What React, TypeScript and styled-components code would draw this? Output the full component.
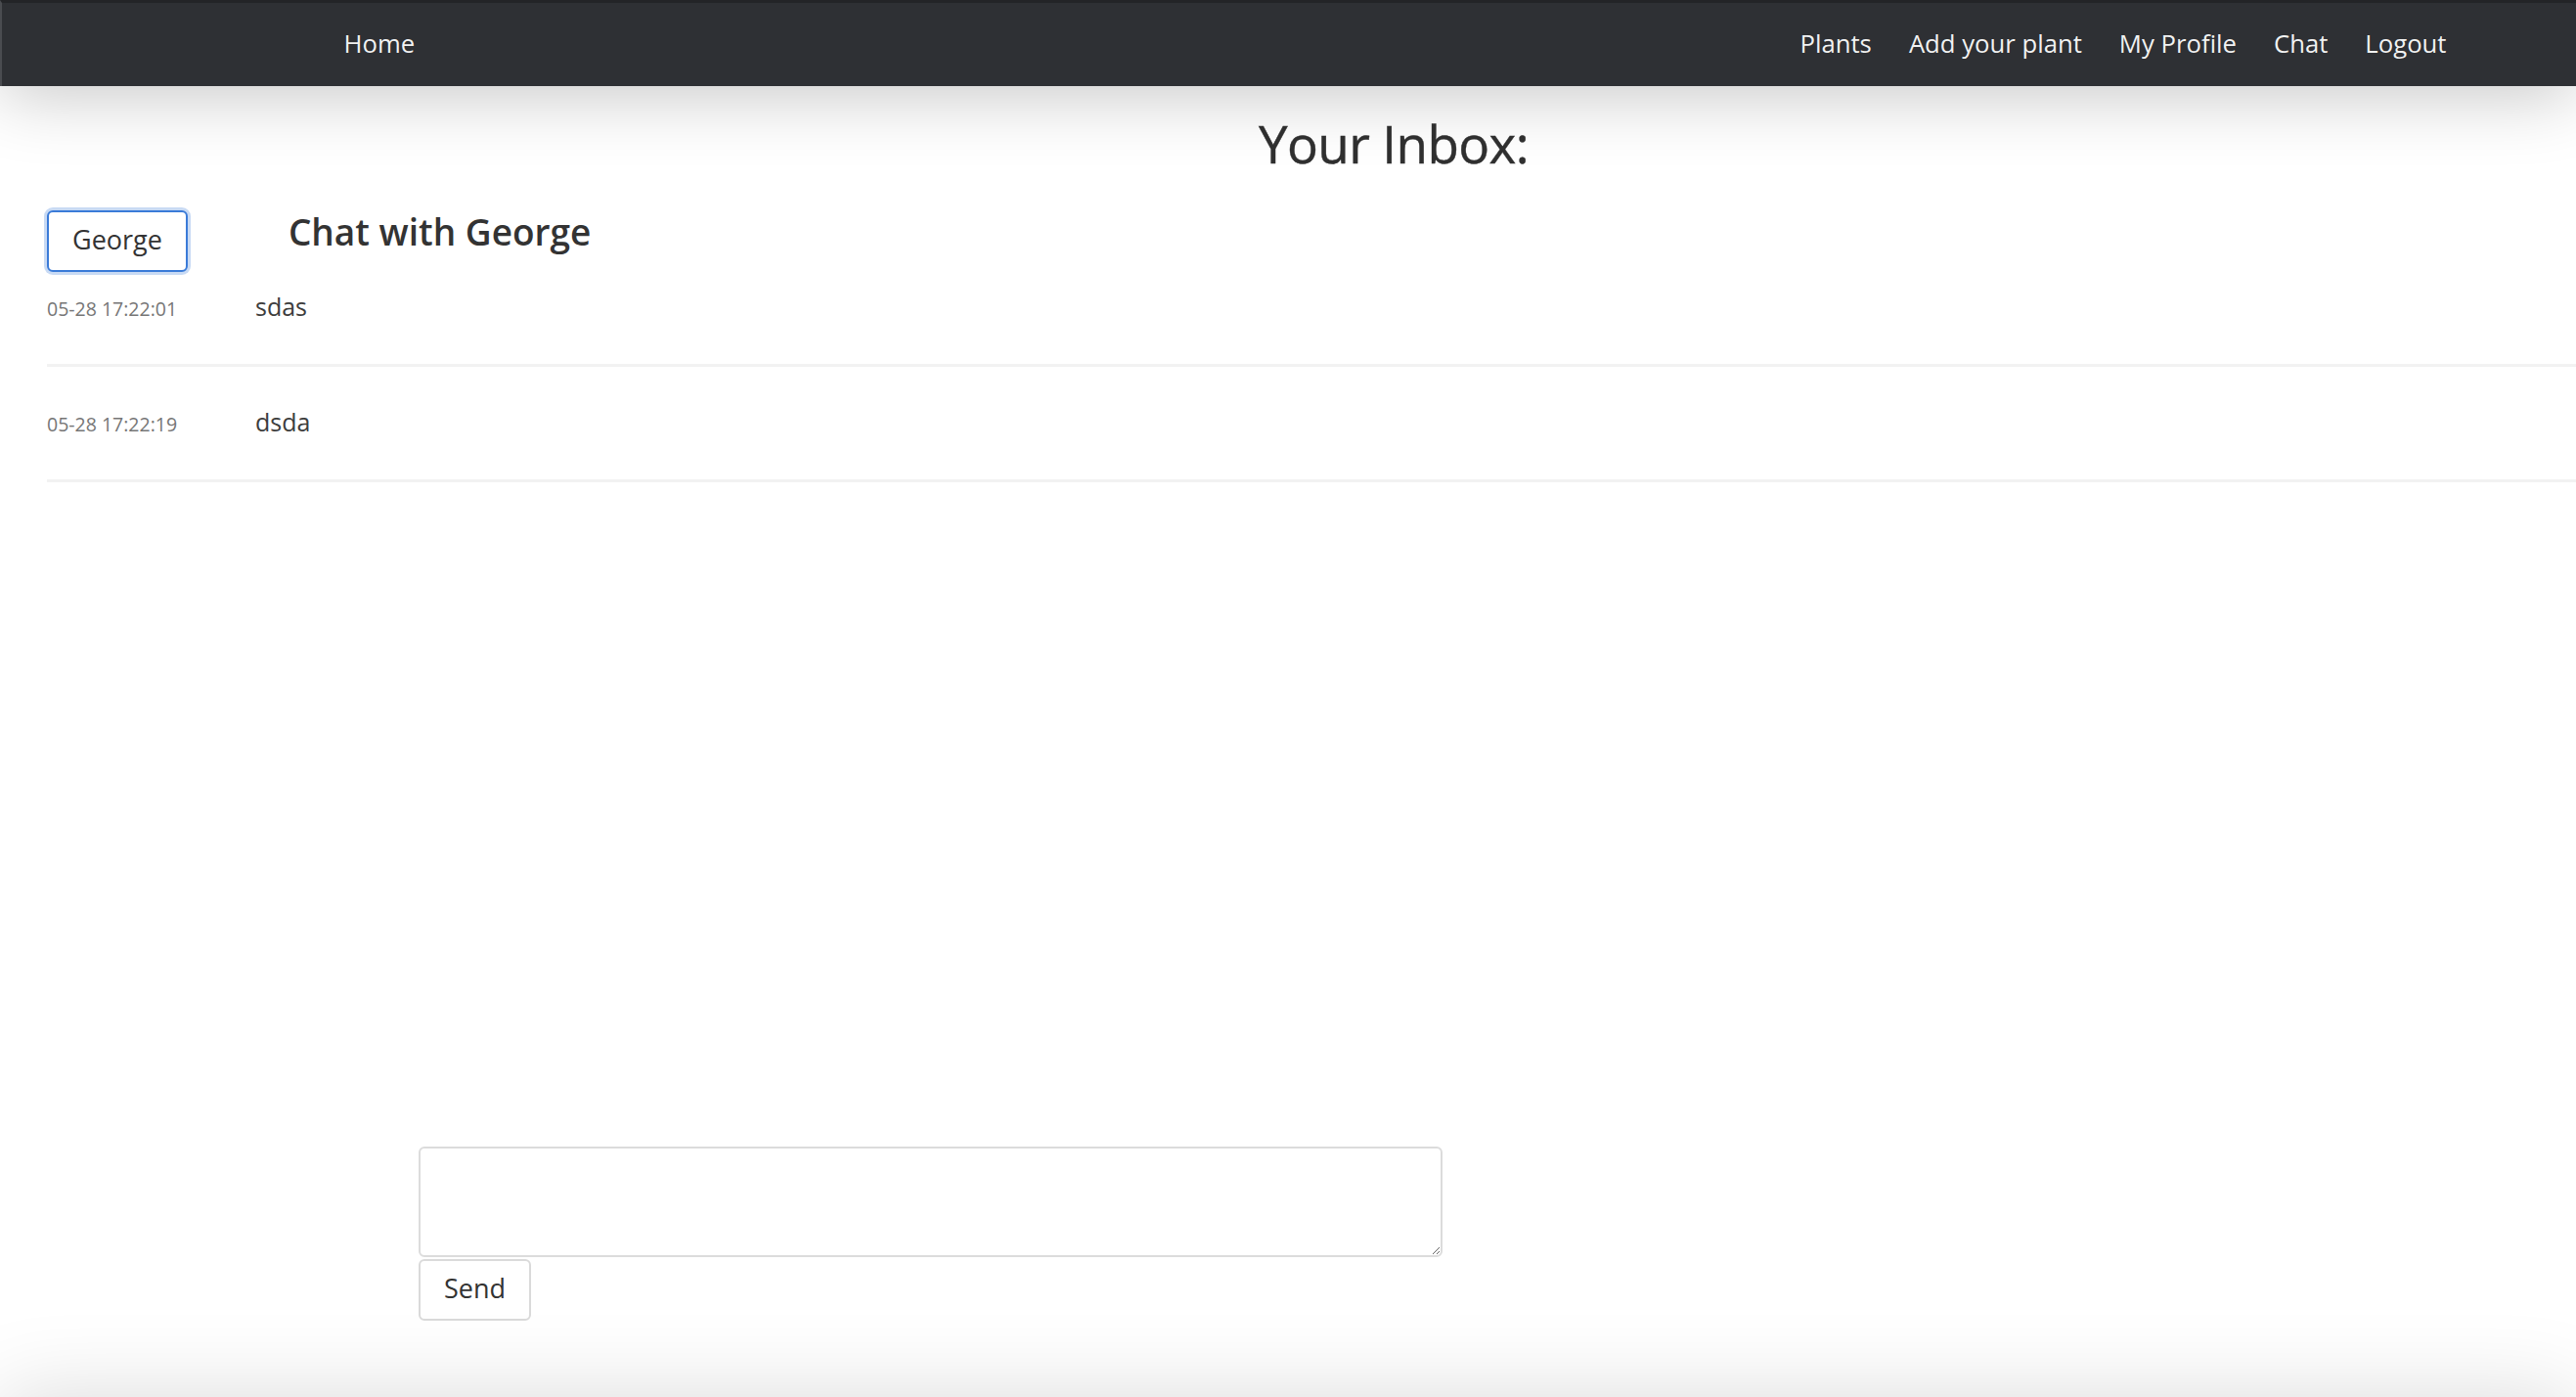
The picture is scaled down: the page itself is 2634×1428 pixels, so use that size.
import React from "react";
import styled, { createGlobalStyle, css } from "styled-components";

const GlobalStyle = createGlobalStyle`
  html, body {
    margin: 0;
    padding: 0;
    overflow: hidden;
    background: #ffffff;
  }
  body {
    font-family: "Open Sans", "Noto Sans", "Liberation Sans", sans-serif;
    color: #333333;
  }
  * { box-sizing: border-box; }
`;

const Page = styled.div`
  display: flex;
  flex-direction: column;
  width: 100%;
`;

const NavBar = styled.nav`
  position: relative;
  z-index: 1;
  height: 88px;
  display: flex;
  align-items: center;
  justify-content: space-between;
  background: #2e3034;
  border-top: 3px solid #232427;
  border-left: 2px solid #4a4c50;
  padding: 0 113.5px 1px 330.5px;
  box-shadow: 0 10px 70px rgba(0, 0, 0, 0.22);
`;

const NavGroup = styled.div`
  display: flex;
  align-items: center;
`;

const NavLink = styled.a`
  font-size: 25.7px;
  line-height: 1.5;
  padding: 0 19px;
  color: rgba(255, 255, 255, 0.94);
  text-decoration: none;
  white-space: nowrap;
`;

const Main = styled.main`
  height: 1340px;
  display: flex;
  flex-direction: column;
  padding-left: 48px;
`;

const InboxTitle = styled.h2`
  margin: 26px 0 0;
  padding-left: 168px;
  text-align: center;
  font-size: 53px;
  line-height: 65px;
  font-weight: 500;
  letter-spacing: -0.6px;
  color: #303030;
  -webkit-text-stroke: 0.4px #303030;
`;

const ChatHeader = styled.div`
  display: flex;
  align-items: flex-start;
  gap: 103px;
  margin-top: 36px;
`;

const PillButton = styled.button<{ $focused?: boolean }>`
  display: inline-flex;
  align-items: center;
  justify-content: center;
  height: 63px;
  padding: 0 24px 3px;
  font-family: "Open Sans", "Noto Sans", sans-serif;
  font-size: 27px;
  line-height: 1.5;
  color: #333333;
  background: #ffffff;
  border: 2px solid #dadada;
  border-radius: 6px;
  cursor: pointer;
  ${(p) =>
    p.$focused &&
    css`
      border-color: #3a7bd8;
      box-shadow: 0 0 0 3px rgba(58, 123, 216, 0.28);
    `}
`;

const ChatTitle = styled.h3`
  margin: 0;
  font-size: 37px;
  line-height: 44px;
  font-weight: 600;
  color: #333333;
`;

const MessageList = styled.div`
  display: flex;
  flex-direction: column;
`;

const MessageRow = styled.div`
  display: flex;
  align-items: baseline;
  padding: 36px 0 39px;
  border-bottom: 3px solid #f2f2f2;
  &:first-child {
    padding-top: 15px;
  }
`;

const Stamp = styled.span`
  flex: 0 0 213px;
  font-size: 19.5px;
  color: #767676;
`;

const MessageText = styled.span`
  font-size: 25px;
  line-height: 40px;
  color: #3d3d3d;
`;

const Composer = styled.form`
  margin: auto 0 78px 380px;
  display: flex;
  flex-direction: column;
  align-items: flex-start;
  gap: 2px;
`;

const MessageInput = styled.textarea`
  display: block;
  width: 1047px;
  height: 113px;
  border: 2px solid #dcdcdc;
  border-radius: 6px;
  font-family: "Open Sans", "Noto Sans", sans-serif;
  font-size: 27px;
  padding: 8px 12px;
  resize: both;
  outline: none;
`;

const Footer = styled.footer`
  height: 120px;
  background: #ffffff;
  box-shadow: 0 0 90px rgba(0, 0, 0, 0.15);
`;

const messages = [
  { time: "05-28 17:22:01", text: "sdas" },
  { time: "05-28 17:22:19", text: "dsda" },
];

export default function App() {
  return (
    <>
      <GlobalStyle />
      <Page>
        <NavBar>
          <NavGroup>
            <NavLink href="#">Home</NavLink>
          </NavGroup>
          <NavGroup>
            <NavLink href="#">Plants</NavLink>
            <NavLink href="#">Add your plant</NavLink>
            <NavLink href="#">My Profile</NavLink>
            <NavLink href="#">Chat</NavLink>
            <NavLink href="#">Logout</NavLink>
          </NavGroup>
        </NavBar>
        <Main>
          <InboxTitle>Your Inbox:</InboxTitle>
          <ChatHeader>
            <PillButton type="button" $focused>
              George
            </PillButton>
            <ChatTitle>Chat with George</ChatTitle>
          </ChatHeader>
          <MessageList>
            {messages.map((m) => (
              <MessageRow key={m.time}>
                <Stamp>{m.time}</Stamp>
                <MessageText>{m.text}</MessageText>
              </MessageRow>
            ))}
          </MessageList>
          <Composer onSubmit={(e) => e.preventDefault()}>
            <MessageInput />
            <PillButton type="submit">Send</PillButton>
          </Composer>
        </Main>
        <Footer />
      </Page>
    </>
  );
}
